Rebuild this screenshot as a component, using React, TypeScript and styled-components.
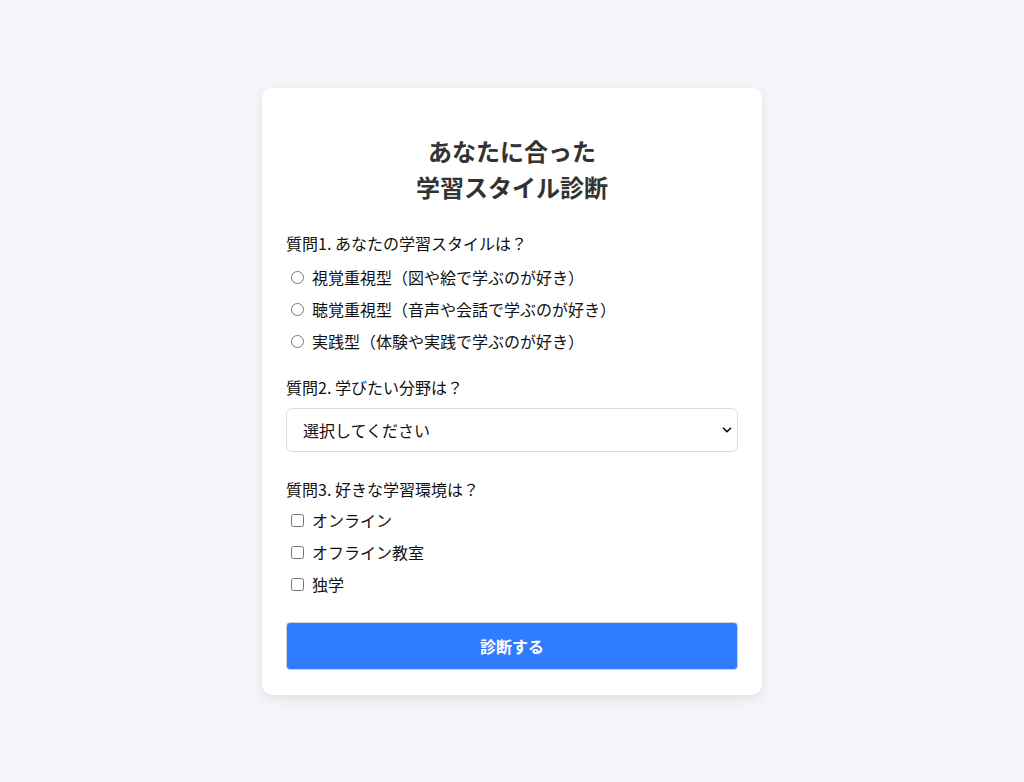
import styled, { createGlobalStyle } from 'styled-components'
import { ChevronDown } from 'lucide-react'

const GlobalStyle = createGlobalStyle`
  * {
    box-sizing: border-box;
  }
  body {
    margin: 0;
    background: #f4f4f9;
    font-family: 'Noto Sans CJK JP', 'Noto Sans', sans-serif;
    color: #111;
  }
`

const q1 = [
  '視覚重視型（図や絵で学ぶのが好き）',
  '聴覚重視型（音声や会話で学ぶのが好き）',
  '実践型（体験や実践で学ぶのが好き）',
]

const q3 = ['オンライン', 'オフライン教室', '独学']

function App() {
  return (
    <>
      <GlobalStyle />
      <Page>
        <Card>
          <Title>
            あなたに合った
            <br />
            学習スタイル診断
          </Title>

          <Question>
            <QuestionLabel>質問1. あなたの学習スタイルは？</QuestionLabel>
            <Options $gap={6}>
              {q1.map((text) => (
                <Option key={text}>
                  <Radio type="radio" name="style" />
                  {text}
                </Option>
              ))}
            </Options>
          </Question>

          <Question $top={18}>
            <QuestionLabel>質問2. 学びたい分野は？</QuestionLabel>
            <SelectWrap>
              <Select defaultValue="">
                <option value="">選択してください</option>
                <option value="it">IT・プログラミング</option>
                <option value="lang">語学</option>
                <option value="biz">ビジネス</option>
              </Select>
              <Chevron size={14} strokeWidth={3} />
            </SelectWrap>
          </Question>

          <Question $top={25}>
            <QuestionLabel>質問3. 好きな学習環境は？</QuestionLabel>
            <Options $gap={3}>
              {q3.map((text) => (
                <Option key={text}>
                  <Check type="checkbox" />
                  {text}
                </Option>
              ))}
            </Options>
          </Question>

          <SubmitButton type="button">診断する</SubmitButton>
        </Card>
      </Page>
    </>
  )
}

const Page = styled.div`
  min-height: 100vh;
  display: flex;
  align-items: center;
  justify-content: center;
`

const Card = styled.div`
  width: 500px;
  background: #fff;
  border-radius: 10px;
  padding: 24px 24px 25px;
  box-shadow: 0 4px 12px rgba(0, 0, 0, 0.08);
`

const Title = styled.h2`
  margin: 21px 0 26px;
  text-align: center;
  font-size: 24px;
  line-height: 36px;
  font-weight: 700;
  color: #333;
`

const Question = styled.div<{ $top?: number }>`
  margin-top: ${(p) => p.$top ?? 0}px;
`

const QuestionLabel = styled.div`
  font-size: 16px;
  line-height: 24px;
`

const Options = styled.div<{ $gap: number }>`
  display: flex;
  flex-direction: column;
  margin-top: ${(p) => p.$gap}px;
`

const Option = styled.label`
  display: flex;
  align-items: center;
  height: 32px;
  font-size: 16px;
  cursor: pointer;
`

const Radio = styled.input`
  width: 13px;
  height: 13px;
  margin: 1px 8px 0 5px;
`

const Check = styled.input`
  width: 13px;
  height: 13px;
  margin: 1px 8px 0 5px;
`

const SelectWrap = styled.div`
  position: relative;
  margin-top: 9px;
`

const Select = styled.select`
  appearance: none;
  width: 100%;
  height: 44px;
  padding: 0 16px;
  border: 1px solid #dcdcdc;
  border-radius: 6px;
  background: #fff;
  font-family: inherit;
  font-size: 16px;
  color: #111;
`

const Chevron = styled(ChevronDown)`
  position: absolute;
  right: 4px;
  top: 15px;
  color: #111;
  pointer-events: none;
`

const SubmitButton = styled.button`
  display: block;
  width: 100%;
  height: 48px;
  margin-top: 22px;
  border: 1px solid #d0d4dc;
  border-radius: 4px;
  background: #2f7cff;
  color: #fff;
  font-family: inherit;
  font-size: 16px;
  font-weight: 700;
  cursor: pointer;
`

export default App
